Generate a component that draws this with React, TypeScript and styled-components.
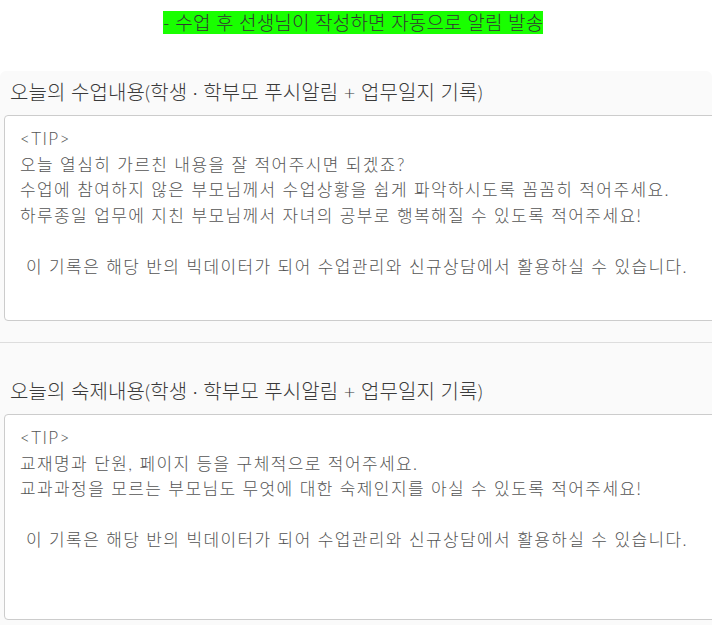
import React from "react";
import styled, { createGlobalStyle } from "styled-components";

const GlobalStyle = createGlobalStyle`
  html, body {
    margin: 0;
    padding: 0;
    background: #ffffff;
    font-family: Lato, "Noto Sans CJK KR", sans-serif;
  }
`;

const Page = styled.div`
  width: 712px;
  padding-top: 12px;
`;

const Notice = styled.div`
  text-align: center;
  padding-right: 6px;
  font-size: 19px;
  line-height: 21px;
  font-weight: 300;
  color: #333;
`;

const Highlight = styled.span`
  background: #19ff00;
  letter-spacing: 0.2px;
`;

const Panel = styled.div`
  margin-top: 38px;
  background: #fafafa;
  border-radius: 6px 6px 0 0;
  overflow: hidden;
`;

const Section = styled.section<{ $first?: boolean }>`
  padding: ${(p) => (p.$first ? "9px" : "36px")} 0 21px 4px;
  border-top: ${(p) => (p.$first ? "none" : "1px solid #dddddd")};
`;

const Title = styled.h3`
  margin: 0 0 11px 6px;
  font-size: 20px;
  line-height: 24px;
  font-weight: 300;
  letter-spacing: 0.1px;
  color: #3a3a3a;
`;

const Memo = styled.textarea<{ $height: number }>`
  display: block;
  box-sizing: border-box;
  width: 760px;
  height: ${(p) => p.$height}px;
  margin: 0;
  padding: 10px 15px;
  border: 1px solid #cccccc;
  border-radius: 4px;
  background: #ffffff;
  font-family: Lato, "Noto Sans CJK KR", sans-serif;
  font-size: 17px;
  line-height: 25.5px;
  font-weight: 300;
  letter-spacing: 1.4px;
  color: #555;
  resize: none;
  outline: none;

  &::placeholder {
    color: #555;
    opacity: 1;
  }
`;

const lessonTip = `<TIP>
오늘 열심히 가르친 내용을 잘 적어주시면 되겠죠?
수업에 참여하지 않은 부모님께서 수업상황을 쉽게 파악하시도록 꼼꼼히 적어주세요.
하루종일 업무에 지친 부모님께서 자녀의 공부로 행복해질 수 있도록 적어주세요!

 이 기록은 해당 반의 빅데이터가 되어 수업관리와 신규상담에서 활용하실 수 있습니다.`;

const homeworkTip = `<TIP>
교재명과 단원, 페이지 등을 구체적으로 적어주세요.
교과과정을 모르는 부모님도 무엇에 대한 숙제인지를 아실 수 있도록 적어주세요!

 이 기록은 해당 반의 빅데이터가 되어 수업관리와 신규상담에서 활용하실 수 있습니다.`;

const App = () => {
  return (
    <>
      <GlobalStyle />
      <Page>
        <Notice>
          <Highlight>- 수업 후 선생님이 작성하면 자동으로 알림 발송</Highlight>
        </Notice>
        <Panel>
          <Section $first>
            <Title>오늘의 수업내용(학생 · 학부모 푸시알림 + 업무일지 기록)</Title>
            <Memo $height={206} placeholder={lessonTip} />
          </Section>
          <Section>
            <Title>오늘의 숙제내용(학생 · 학부모 푸시알림 + 업무일지 기록)</Title>
            <Memo $height={206} placeholder={homeworkTip} />
          </Section>
        </Panel>
      </Page>
    </>
  );
};

export default App;
